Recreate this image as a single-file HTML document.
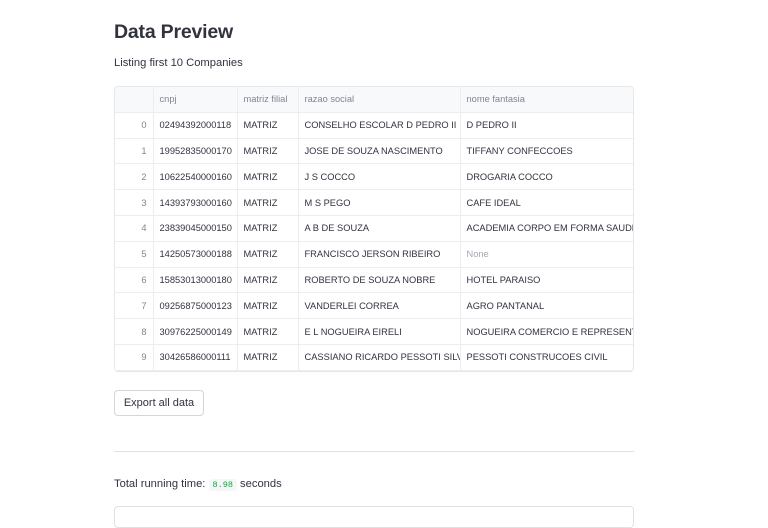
<!DOCTYPE html>
<html><head><style>
body{margin:0;width:768px;height:512px;overflow:hidden;background:#fff;font-family:"Liberation Sans",sans-serif;color:#31333f;position:relative}
.a{position:absolute}
h1{position:absolute;left:114px;top:21px;margin:0;font-size:19.5px;font-weight:bold;letter-spacing:-0.2px}
.tbl{position:absolute;left:114px;top:86px;width:518px;height:284px;border:1px solid #e6e7ea;border-radius:4px;overflow:hidden}
table{border-collapse:collapse;font-size:9.3px;table-layout:fixed;width:520px}
td,th{height:24.8px;padding:0 6px;border-right:1px solid #ecedef;border-bottom:1px solid #ecedef;white-space:nowrap;overflow:hidden;text-align:left;font-weight:normal}
th{background:#f8f9fb;color:#808495}
td.i{text-align:right;color:#808495;background:#fff}
.btn{position:absolute;left:114px;top:390px;width:88px;height:24px;border:1px solid #d5d6da;border-radius:4px;font-size:11px;line-height:24px;text-align:center}
code{font-family:"Liberation Mono",monospace;font-size:8.5px;color:#09ab3b;background:#f5f6f8;padding:1px 4px;border-radius:3px}
</style></head><body>
<h1>Data Preview</h1>
<div class="a" style="left:114px;top:57px;font-size:11.2px">Listing first 10 Companies</div>
<div class="tbl"><table>
<colgroup><col style="width:38px"><col style="width:84px"><col style="width:61px"><col style="width:162px"><col style="width:175px"></colgroup>
<tr><th></th><th>cnpj</th><th>matriz filial</th><th>razao social</th><th>nome fantasia</th></tr>
<tr><td class="i">0</td><td>02494392000118</td><td>MATRIZ</td><td>CONSELHO ESCOLAR D PEDRO II</td><td>D PEDRO II</td></tr>
<tr><td class="i">1</td><td>19952835000170</td><td>MATRIZ</td><td>JOSE DE SOUZA NASCIMENTO</td><td>TIFFANY CONFECCOES</td></tr>
<tr><td class="i">2</td><td>10622540000160</td><td>MATRIZ</td><td>J S COCCO</td><td>DROGARIA COCCO</td></tr>
<tr><td class="i">3</td><td>14393793000160</td><td>MATRIZ</td><td>M S PEGO</td><td>CAFE IDEAL</td></tr>
<tr><td class="i">4</td><td>23839045000150</td><td>MATRIZ</td><td>A B DE SOUZA</td><td>ACADEMIA CORPO EM FORMA SAUDE</td></tr>
<tr><td class="i">5</td><td>14250573000188</td><td>MATRIZ</td><td>FRANCISCO JERSON RIBEIRO</td><td style="color:#a3a8b4">None</td></tr>
<tr><td class="i">6</td><td>15853013000180</td><td>MATRIZ</td><td>ROBERTO DE SOUZA NOBRE</td><td>HOTEL PARAISO</td></tr>
<tr><td class="i">7</td><td>09256875000123</td><td>MATRIZ</td><td>VANDERLEI CORREA</td><td>AGRO PANTANAL</td></tr>
<tr><td class="i">8</td><td>30976225000149</td><td>MATRIZ</td><td>E L NOGUEIRA EIRELI</td><td>NOGUEIRA COMERCIO E REPRESENTACOES</td></tr>
<tr><td class="i">9</td><td>30426586000111</td><td>MATRIZ</td><td>CASSIANO RICARDO PESSOTI SILVA</td><td>PESSOTI CONSTRUCOES CIVIL</td></tr>
</table></div>
<div class="btn">Export all data</div>
<div class="a" style="left:114px;top:451px;width:520px;height:1px;background:#e0e1e4"></div>
<div class="a" style="left:114px;top:478px;font-size:11.2px">Total running time: <code>8.98</code> seconds</div>
<div class="a" style="left:114px;top:506px;width:518px;height:20px;border:1px solid #e0e1e4;border-radius:4px"></div>
</body></html>
